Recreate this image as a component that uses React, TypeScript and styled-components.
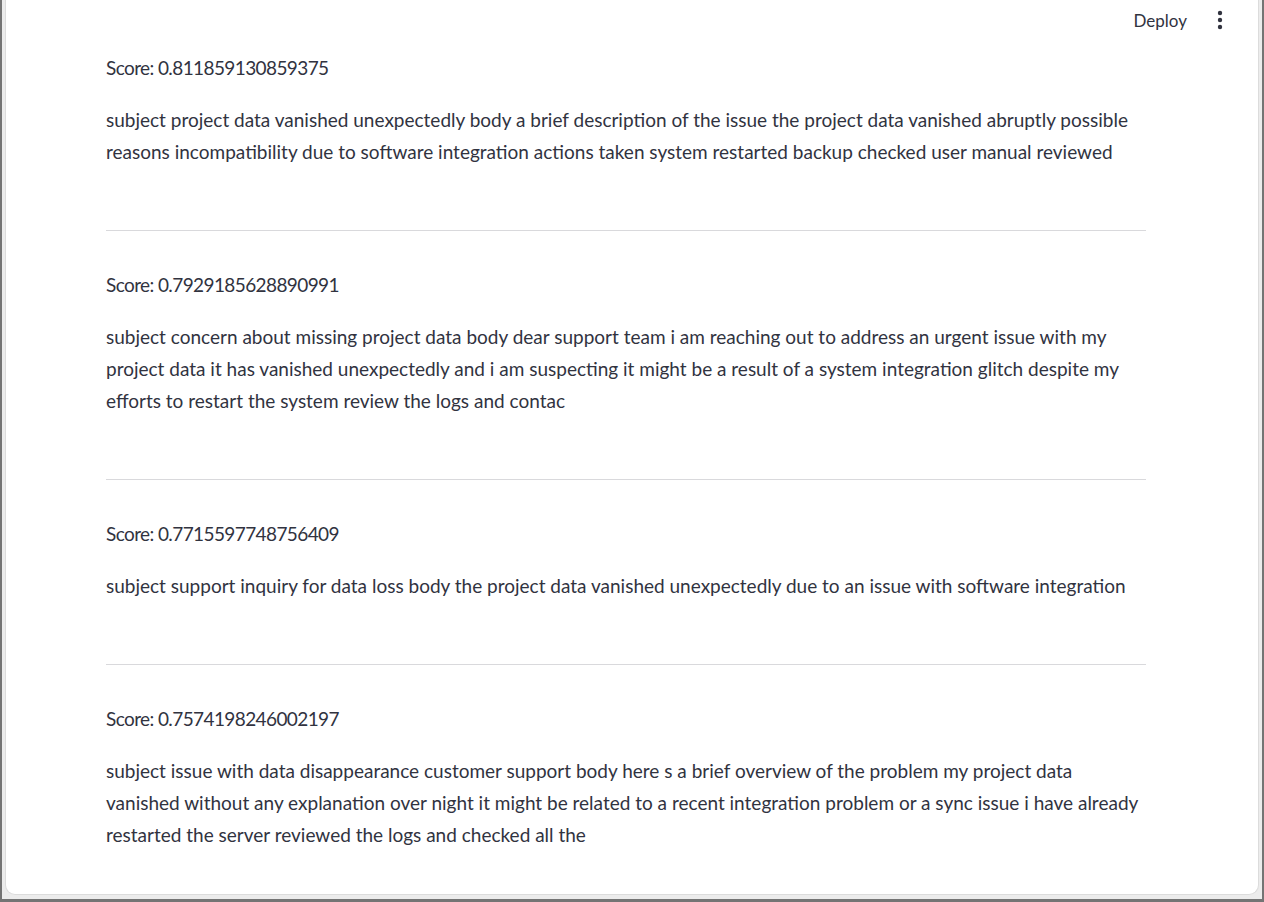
import React from "react";
import styled, { createGlobalStyle } from "styled-components";

const GlobalStyle = createGlobalStyle`
  html, body {
    margin: 0;
    padding: 0;
    background: #ffffff;
  }
  * {
    box-sizing: border-box;
  }
`;

const Frame = styled.div`
  height: 902px;
  display: flex;
  background: #ececec;
  border-left: 2px solid #747474;
  border-right: 2px solid #747474;
  border-bottom: 3px solid #747474;
  padding: 0 3px 4px 3px;
`;

const Card = styled.div`
  flex: 1;
  display: flex;
  flex-direction: column;
  background: #ffffff;
  border: 1px solid #dcdcdc;
  border-top: none;
  border-radius: 0 0 10px 10px;
  overflow: hidden;
  font-family: Lato, "Liberation Sans", sans-serif;
  color: #31333f;
`;

const Header = styled.header`
  height: 40px;
  display: flex;
  align-items: center;
  justify-content: flex-end;
  gap: 23px;
  padding-right: 28px;
`;

const DeployButton = styled.button`
  border: none;
  background: none;
  font-family: inherit;
  font-size: 17px;
  color: #31333f;
  padding: 0;
  cursor: pointer;
`;

const MenuButton = styled.button`
  border: none;
  background: none;
  width: 20px;
  height: 26px;
  padding: 0;
  display: flex;
  align-items: center;
  justify-content: center;
  cursor: pointer;
`;

const Main = styled.main`
  padding: 13px 0 0 100px;
  width: 1140px;
`;

const Entry = styled.section`
  display: flex;
  flex-direction: column;
`;

const Score = styled.p`
  margin: -1px 0 1px;
  font-size: 19px;
  line-height: 32px;
  letter-spacing: -0.6px;
`;

const Body = styled.p`
  margin: 19px 0 1px;
  font-size: 19px;
  line-height: 32px;
`;

const Divider = styled.hr`
  margin: 61px 0 39px;
  border: none;
  height: 1px;
  background: #d9d9dc;
`;

const results = [
  {
    score: "0.811859130859375",
    text: "subject project data vanished unexpectedly body a brief description of the issue the project data vanished abruptly possible reasons incompatibility due to software integration actions taken system restarted backup checked user manual reviewed",
  },
  {
    score: "0.7929185628890991",
    text: "subject concern about missing project data body dear support team i am reaching out to address an urgent issue with my project data it has vanished unexpectedly and i am suspecting it might be a result of a system integration glitch despite my efforts to restart the system review the logs and contac",
  },
  {
    score: "0.7715597748756409",
    text: "subject support inquiry for data loss body the project data vanished unexpectedly due to an issue with software integration",
  },
  {
    score: "0.7574198246002197",
    text: "subject issue with data disappearance customer support body here s a brief overview of the problem my project data vanished without any explanation over night it might be related to a recent integration problem or a sync issue i have already restarted the server reviewed the logs and checked all the",
  },
];

const KebabIcon = () => (
  <svg width="6" height="20" viewBox="0 0 6 20" fill="#31333f">
    <circle cx="3" cy="3" r="2.2" />
    <circle cx="3" cy="10" r="2.2" />
    <circle cx="3" cy="17" r="2.2" />
  </svg>
);

export default function App() {
  return (
    <>
      <GlobalStyle />
      <Frame>
        <Card>
          <Header>
            <DeployButton>Deploy</DeployButton>
            <MenuButton aria-label="Main menu">
              <KebabIcon />
            </MenuButton>
          </Header>
          <Main>
            {results.map((r, i) => (
              <Entry key={r.score}>
                <Score>Score: {r.score}</Score>
                <Body>{r.text}</Body>
                {i < results.length - 1 && <Divider />}
              </Entry>
            ))}
          </Main>
        </Card>
      </Frame>
    </>
  );
}
